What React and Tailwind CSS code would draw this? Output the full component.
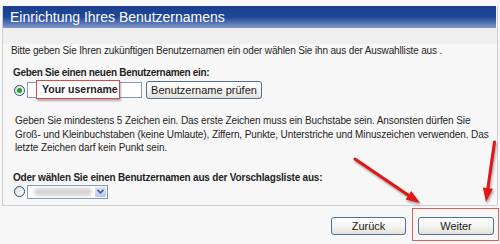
import React from "react";

function Radio({ checked }) {
  return (
    <div className="w-[11px] h-[11px] rounded-full border border-[#1c5180] bg-gradient-to-br from-[#dcdcd6] to-white flex items-center justify-center shrink-0">
      {checked && <div className="w-[5px] h-[5px] rounded-full bg-[#21a121]" />}
    </div>
  );
}

function XPButton({ children, className = "" }) {
  return (
    <div
      className={
        "h-[18px] rounded-[3px] border border-[#4f6f9c] bg-gradient-to-b from-white via-[#f5f4f0] to-[#e4e2da] flex items-center justify-center text-[11px] text-[#1a1a1a] whitespace-nowrap " +
        className
      }
    >
      {children}
    </div>
  );
}

export default function App() {
  return (
    <div
      className="relative w-[500px] h-[244px] bg-[#f7f7f7] overflow-hidden text-[#1f1f1f]"
      style={{ fontFamily: '"Liberation Sans", Arial, sans-serif' }}
    >
      <div className="ml-[2px] mt-[6px] w-[496px] h-[200px] border-x border-b border-[#d0d0d0] bg-[#f7f7f7] flex flex-col">
        <div className="h-[22px] w-[493px] bg-gradient-to-b from-[#1c3f8e] via-[#1f4797] to-[#8397c9] flex items-center pl-[7px]">
          <span className="text-[14px] text-white leading-none">Einrichtung Ihres Benutzernamens</span>
        </div>
        <div className="h-[16px] bg-[#efefef]" />
        <div className="pl-[8px] text-[10px] tracking-[-0.15px] leading-[14px] whitespace-nowrap">
          Bitte geben Sie Ihren zukünftigen Benutzernamen ein oder wählen Sie ihn aus der Auswahlliste aus .
        </div>
        <div className="mt-[8px] pl-[10px] text-[10px] tracking-[-0.3px] leading-[14px] font-bold whitespace-nowrap">
          Geben Sie einen neuen Benutzernamen ein:
        </div>
        <div className="mt-[1px] pl-[11px] h-[18px] flex items-center">
          <Radio checked />
          <div className="relative ml-[2px] w-[115px] h-[16px] border border-[#7f9db9] bg-white">
            <div className="absolute left-[8px] top-[-3px] w-[84px] h-[19px] border border-[#e04848] bg-white shadow-[1px_2px_2px_rgba(0,0,0,0.3)] flex items-center pl-[5px] text-[10.5px] font-bold whitespace-nowrap">
              Your username
            </div>
          </div>
          <XPButton className="ml-[4px] w-[116px]">Benutzername prüfen</XPButton>
        </div>
        <div className="mt-[15px] pl-[12px] text-[10px] tracking-[-0.1px] leading-[13.5px] whitespace-nowrap">
          Geben Sie mindestens 5 Zeichen ein. Das erste Zeichen muss ein Buchstabe sein. Ansonsten dürfen Sie
          <br />
          Groß- und Kleinbuchstaben (keine Umlaute), Ziffern, Punkte, Unterstriche und Minuszeichen verwenden. Das
          <br />
          letzte Zeichen darf kein Punkt sein.
        </div>
        <div className="mt-[16px] pl-[10px] text-[10px] tracking-[-0.2px] leading-[14px] font-bold whitespace-nowrap">
          Oder wählen Sie einen Benutzernamen aus der Vorschlagsliste aus:
        </div>
        <div className="mt-[0px] pl-[11px] h-[14px] flex items-center">
          <Radio />
          <div className="ml-[2px] w-[81px] h-[14px] border border-[#7f9db9] bg-white flex items-center">
            <div className="ml-[6px] w-[58px] h-[8px] rounded-full bg-[#d6d6d6] blur-[1.5px]" />
            <div className="ml-auto mr-[1px] w-[11px] h-[10px] rounded-[1px] bg-gradient-to-b from-[#dbe6fd] to-[#b5c8f5] flex items-center justify-center">
              <svg width="7" height="5" viewBox="0 0 7 5">
                <path d="M0.5 0.8 L3.5 3.8 L6.5 0.8" fill="none" stroke="#4d6185" strokeWidth="1.6" />
              </svg>
            </div>
          </div>
        </div>
      </div>

      <div className="flex justify-end items-start pr-[1px] mt-[2px]">
        <XPButton className="mt-[9px] w-[75px] mr-[6px]">Zurück</XPButton>
        <div className="w-[87px] h-[33px] border border-[#e35a5a] pt-[8px] pl-[5px]">
          <XPButton className="w-[76px]">Weiter</XPButton>
        </div>
      </div>

      <svg
        className="absolute inset-0 pointer-events-none drop-shadow-[1px_2px_1px_rgba(0,0,0,0.35)]"
        width="500"
        height="244"
        viewBox="0 0 500 244"
      >
        <line x1="355" y1="159" x2="408.4" y2="195.2" stroke="#e31515" strokeWidth="3" strokeLinecap="round" />
        <polygon points="420,203 405.6,199.4 411.2,191.0" fill="#e31515" />
        <line x1="494.5" y1="142" x2="487.9" y2="188.1" stroke="#e31515" strokeWidth="3" strokeLinecap="round" />
        <polygon points="486,202 482.9,187.4 492.9,188.8" fill="#e31515" />
      </svg>
    </div>
  );
}
